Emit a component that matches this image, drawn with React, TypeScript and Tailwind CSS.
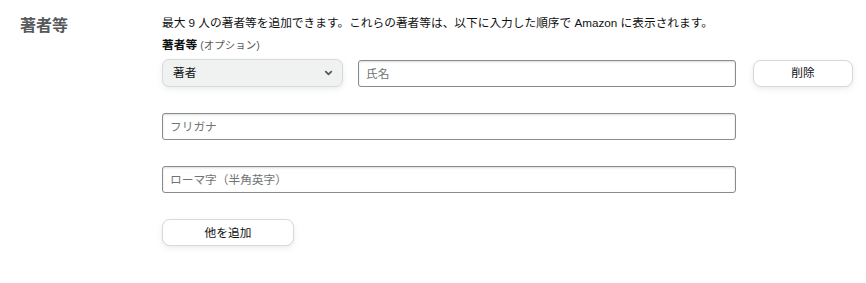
import { ChevronDown } from "lucide-react";

const FONT = {
  fontFamily: '"Liberation Sans", "Noto Sans CJK JP", sans-serif',
};

function TextField({ placeholder, className }: { placeholder: string; className: string }) {
  return (
    <input
      type="text"
      placeholder={placeholder}
      className={`h-[27px] rounded-[3px] border border-[#888c8c] bg-white px-[7px] text-[11.7px] text-[#0f1111] shadow-[inset_0_1px_2px_rgba(15,17,17,0.15)] outline-none placeholder:text-[#6f7373] ${className}`}
    />
  );
}

function SecondaryButton({ label, className }: { label: string; className: string }) {
  return (
    <button
      type="button"
      className={`h-[27px] rounded-[8px] border border-[#d5d9d9] bg-white text-[11.7px] text-[#0f1111] shadow-[0_2px_5px_rgba(213,217,217,0.5)] ${className}`}
    >
      {label}
    </button>
  );
}

export default function App() {
  return (
    <div style={FONT} className="flex h-[283px] w-[866px] bg-white text-[#0f1111]">
      <div className="w-[162px] shrink-0 pl-[20px] pt-[14px]">
        <h2 className="text-[16px] font-bold text-[#565959]">著者等</h2>
      </div>

      <div className="flex flex-col pt-[14px]">
        <p className="text-[11.7px] leading-[18px]">
          最大 9 人の著者等を追加できます。これらの著者等は、以下に入力した順序で Amazon に表示されます。
        </p>
        <p className="mt-[4px] text-[11.7px] font-bold leading-[18px]">
          著者等 <span className="text-[10.5px] font-normal text-[#565959]">(オプション)</span>
        </p>

        <div className="mt-[5px] flex items-center">
          <div className="relative h-[28px] w-[181px]">
            <select className="h-full w-full appearance-none rounded-[7px] border border-[#d5d9d9] bg-[#f0f2f2] pl-[10px] text-[11.7px] text-[#0f1111] shadow-[0_2px_5px_rgba(213,217,217,0.5)] outline-none">
              <option>著者</option>
            </select>
            <ChevronDown
              className="pointer-events-none absolute right-[9px] top-1/2 size-[11px] -translate-y-1/2 text-[#565959]"
              strokeWidth={4}
            />
          </div>
          <TextField placeholder="氏名" className="ml-[15px] w-[378px]" />
          <SecondaryButton label="削除" className="ml-[17px] w-[100px]" />
        </div>

        <TextField placeholder="フリガナ" className="mt-[26px] w-[574px]" />
        <TextField placeholder="ローマ字（半角英字）" className="mt-[26px] w-[574px]" />

        <SecondaryButton label="他を追加" className="mt-[26px] w-[132px]" />
      </div>
    </div>
  );
}
